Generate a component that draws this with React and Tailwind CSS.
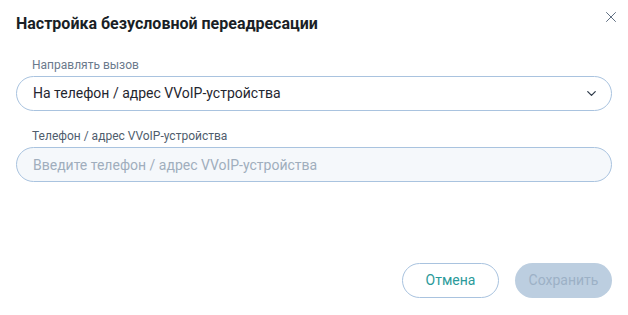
import { X, ChevronDown } from "lucide-react";

export default function App() {
  return (
    <div className="w-[628px] h-[315px] bg-white px-4 pt-[13px] font-['Roboto',sans-serif] flex flex-col">
      {/* Header */}
      <div className="flex items-start justify-between">
        <h2 className="text-[16px] leading-[22px] font-bold text-[#1a1f26]">
          Настройка безусловной переадресации
        </h2>
        <button className="mr-[-12px] mt-[-9px] mb-[-9px] p-1 text-[#5b6b7e]">
          <X size={18} strokeWidth={1.3} />
        </button>
      </div>

      {/* Forward call select */}
      <div className="mt-[22px]">
        <div className="pl-4 text-[12px] leading-[16px] text-[#6b7a8c]">Направлять вызов</div>
        <div className="mt-[3px] h-[35px] rounded-full border border-[#a9c3df] flex items-center justify-between pl-4 pr-[12px]">
          <span className="text-[14px] text-[#1f2630]">На телефон / адрес VVoIP-устройства</span>
          <ChevronDown size={15} strokeWidth={2} className="text-[#2f3b4a]" />
        </div>
      </div>

      {/* Phone input */}
      <div className="mt-[17px]">
        <div className="pl-4 text-[12px] leading-[16px] text-[#4f5d6d]">Телефон / адрес VVoIP-устройства</div>
        <input
          className="mt-[3px] w-full h-[35px] rounded-full border border-[#a9c3df] bg-[#f5f8fb] pl-4 text-[14px] text-[#1f2630] placeholder:text-[#a0aebd] outline-none"
          placeholder="Введите телефон / адрес VVoIP-устройства"
        />
      </div>

      {/* Actions */}
      <div className="mt-auto mb-[17px] flex justify-end gap-4">
        <button className="w-[97px] h-[35px] rounded-full border border-[#a9c3df] text-[14px] text-[#2b9a9a]">
          Отмена
        </button>
        <button className="w-[97px] h-[35px] rounded-full bg-[#bccee0] text-[14px] text-[#9cb1c6]">
          Сохранить
        </button>
      </div>
    </div>
  );
}
